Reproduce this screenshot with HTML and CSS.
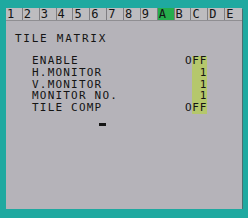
FILE: index.html
```html
<!DOCTYPE html>
<html lang="en">
<head>
    <meta charset="UTF-8">
    <title>Tile Matrix</title>
    <link rel="stylesheet" href="styles.css">
</head>
<body>

<!-- OSD Panel -->
<div class="osd">
    <div class="tabs">
        <span>1</span><span>2</span><span>3</span><span>4</span><span>5</span><span>6</span><span>7</span>
        <span>8</span><span>9</span><span class="active">A</span><span>B</span><span>C</span><span>D</span><span>E</span>
    </div>

    <div class="title">TILE MATRIX</div>

    <div class="menu">
        <div class="labels">
            <div>ENABLE</div>
            <div>H.MONITOR</div>
            <div>V.MONITOR</div>
            <div>MONITOR NO.</div>
            <div>TILE COMP</div>
        </div>
        <div class="values">
            <div>OFF</div>
            <div>1</div>
            <div>1</div>
            <div>1</div>
            <div>OFF</div>
        </div>
    </div>

    <div class="cursor"></div>
</div>

</body>
</html>
```

FILE: styles.css
```css
/* Global Styles */
body {
    margin: 0;
    background: #1fa9a0;
    font-family: 'DejaVu Sans Mono', monospace;
}

/* Panel */
.osd {
    margin: 8px 6px 0 6px;
    width: 236px;
    height: 201px;
    background: #b5b3b9;
    box-shadow: 1px 1px 0 #4b6f70;
    color: #141414;
}

/* Tab Bar */
.tabs {
    display: grid;
    grid-template-columns: repeat(14, 1fr);
    height: 12px;
    background: #bdbcbf;
    border-bottom: 1px solid #8f8e92;
    font-size: 12px;
    line-height: 12px;
}

.tabs span {
    padding-left: 1px;
    border-right: 1px solid #7f7e82;
}

.tabs span:last-child {
    border-right: none;
}

.tabs .active {
    background: #25ad4c;
}

/* Title */
.title {
    margin: 12px 0 0 9px;
    font-size: 11px;
    letter-spacing: 1.75px;
    line-height: 11px;
}

/* Menu Rows */
.menu {
    display: flex;
    justify-content: space-between;
    margin: 11px 35px 0 26px;
    font-size: 11px;
    line-height: 11.8px;
}

.labels {
    letter-spacing: 1.2px;
}

.values {
    position: relative;
    text-align: right;
    letter-spacing: 0.7px;
}

.values::before {
    content: "";
    position: absolute;
    top: 1px;
    bottom: 0;
    right: 0;
    width: 15px;
    background: #b5c76c;
}

.values div {
    position: relative;
}

.cursor {
    margin: 9px 0 0 93px;
    width: 7px;
    height: 3px;
    background: #141414;
}
```
